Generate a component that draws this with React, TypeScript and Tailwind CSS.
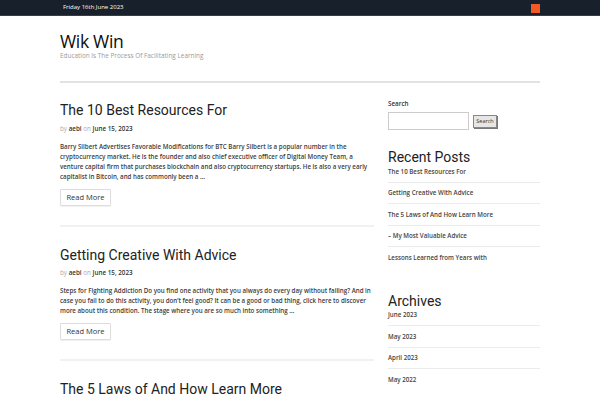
import React from "react"

const posts = [
  {
    title: "The 10 Best Resources For",
    excerpt:
      "Barry Silbert Advertises Favorable Modifications for BTC Barry Silbert is a popular number in the cryptocurrency market. He is the founder and also chief executive officer of Digital Money Team, a venture capital firm that purchases blockchain and also cryptocurrency startups. He is also a very early capitalist in Bitcoin, and has commonly been a …",
  },
  {
    title: "Getting Creative With Advice",
    excerpt:
      "Steps for Fighting Addiction Do you find one activity that you always do every day without failing? And in case you fail to do this activity, you don’t feel good? It can be a good or bad thing, click here to discover more about this condition. The stage where you are so much into something …",
  },
  {
    title: "The 5 Laws of And How Learn More",
    excerpt: "",
  },
]

const recent = [
  "The 10 Best Resources For",
  "Getting Creative With Advice",
  "The 5 Laws of And How Learn More",
  "– My Most Valuable Advice",
  "Lessons Learned from Years with",
]

const archives = ["June 2023", "May 2023", "April 2023", "May 2022"]

function WidgetList({ items }: { items: string[] }) {
  return (
    <ul>
      {items.map((item, i) => (
        <li
          key={i}
          className={`text-[6.2px] leading-[8px] font-semibold text-[#444] ${i === 0 ? "pt-[2.5px]" : "pt-[6.5px]"} ${
            i < items.length - 1 ? "pb-[6px] border-b border-[#ececec]" : ""
          }`}
        >
          {item}
        </li>
      ))}
    </ul>
  )
}

export default function App() {
  return (
    <div className="h-[400px] w-[600px] overflow-hidden bg-white font-['Open_Sans',sans-serif]">
      {/* Top bar */}
      <div className="h-[16px] bg-[#18212b] border-b border-[#2e414b]">
        <div className="mx-auto flex h-full w-[480px] items-center justify-between pl-[3px]">
          <span className="text-[6px] text-white">Friday 16th June 2023</span>
          <span className="mt-[1px] block h-[9px] w-[9px] bg-[#f15a24]" />
        </div>
      </div>

      <div className="mx-auto w-[480px]">
        {/* Header */}
        <header className="pt-[15px] pb-[21px] border-b-2 border-[#e2e2e2]">
          <h1 className="text-[17.5px] leading-[21px] tracking-[-0.3px] text-[#0c0c0c]">Wik Win</h1>
          <p className="text-[6.4px] leading-[8px] text-[#9a9a9a]">Education Is The Process Of Facilitating Learning</p>
        </header>

        <div className="flex items-start gap-[14px]">
          {/* Posts */}
          <main className="w-[314px] pt-[18px]">
            {posts.map((p, i) => (
              <article key={i} className={i > 0 ? "border-t-2 border-[#f1f1f1] pt-[19px]" : ""}>
                <h2 className="font-['Roboto',sans-serif] text-[14px] leading-[18px] text-[#222]">{p.title}</h2>
                {p.excerpt && (
                  <>
                    <p className="mt-[5.5px] text-[6.3px] leading-[8px] text-[#aaa]">
                      by <span className="font-semibold text-[#333]">aebi</span> on{" "}
                      <span className="font-semibold text-[#333]">June 15, 2023</span>
                    </p>
                    <p className="mt-[9px] text-[6.2px] leading-[10px] font-semibold text-[#3d3d3d]">{p.excerpt}</p>
                    <button className="mt-[7px] mb-[19px] h-[17px] w-[51px] rounded-[1px] border border-[#ddd] text-[7.5px] text-[#333] shadow-[0_1px_1px_rgba(0,0,0,0.06)]">
                      Read More
                    </button>
                  </>
                )}
              </article>
            ))}
          </main>

          {/* Sidebar */}
          <aside className="w-[152px] pt-[17px]">
            <p className="text-[6.3px] leading-[8px] font-semibold text-[#333]">Search</p>
            <div className="mt-[4px] flex items-center gap-[4px]">
              <div className="h-[18px] w-[81px] border border-[#ccc]" />
              <button className="h-[13px] w-[24px] border border-[#888] bg-[#e6e6e6] text-[5.5px] text-[#333] shadow-[1px_1px_0_#777]">
                Search
              </button>
            </div>

            <h3 className="mt-[19px] font-['Roboto',sans-serif] text-[14px] leading-[16px] text-[#222]">Recent Posts</h3>
            <WidgetList items={recent} />

            <h3 className="mt-[31px] font-['Roboto',sans-serif] text-[14px] leading-[16px] text-[#222]">Archives</h3>
            <WidgetList items={archives} />
          </aside>
        </div>
      </div>
    </div>
  )
}
